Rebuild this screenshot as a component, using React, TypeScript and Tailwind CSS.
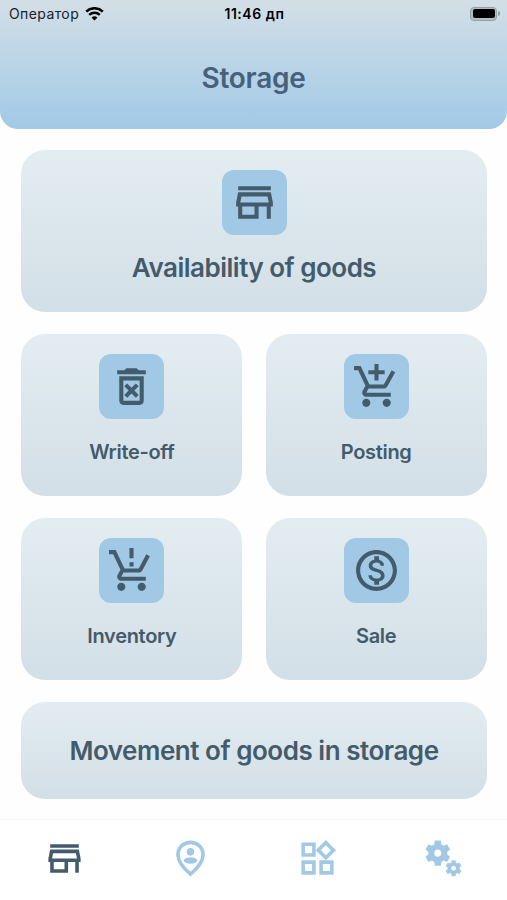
import React from 'react';
import {
    MdOutlineStore,
    MdOutlineDeleteForever,
    MdOutlineAddShoppingCart,
    MdOutlineProductionQuantityLimits,
    MdOutlineMonetizationOn,
    MdOutlineWidgets,
    MdMiscellaneousServices
} from 'react-icons/md';

type Icon = React.ComponentType<{ size?: number }>;

const PersonPin: Icon = ({ size = 24 }) => (
    <svg width={size} height={size} viewBox="0 0 24 24" fill="currentColor">
        <path
            d="M12 3c3.5 0 7 2.6 7 6.9 0 3.2-2.3 6.9-7 10.8-4.7-3.9-7-7.6-7-10.8C5 5.6 8.5 3 12 3z"
            fill="none"
            stroke="currentColor"
            strokeWidth="2"
        />
        <circle cx="12" cy="8.3" r="2.1" />
        <ellipse cx="12" cy="13.1" rx="3.8" ry="1.8" />
    </svg>
);

const StatusBar: React.FC = () => (
    <div className="grid grid-cols-3 items-center h-[27px] pl-[9px] pr-[7px] text-black">
        <div className="flex items-center gap-[6px]">
            <span className="text-[14px] tracking-[0.4px] text-[#17222b]">Оператор</span>
            <svg width="19" height="14" viewBox="0 0 19 14" fill="none" stroke="currentColor">
                <path d="M1.2 4.6a12 12 0 0 1 16.6 0" strokeWidth="2.6" />
                <path d="M4.2 7.9a7.7 7.7 0 0 1 10.6 0" strokeWidth="2.4" />
                <path d="M9.5 13.6 6.6 10.7a4.2 4.2 0 0 1 5.8 0z" fill="currentColor" stroke="none" />
            </svg>
        </div>
        <span className="text-center text-[14px] font-semibold tracking-[0.55px] whitespace-nowrap">11:46 дп</span>
        <div className="flex justify-end items-center gap-px">
            <div className="w-[27px] h-[14px] rounded-[4px] border border-[#93a0a6] bg-[#b3bec2] p-[1.5px]">
                <div className="w-full h-full rounded-[2px] bg-black" />
            </div>
            <div className="w-[2px] h-[5px] rounded-r-full bg-[#93a0a6]" />
        </div>
    </div>
);

interface CardProps {
    title: string;
    icon?: Icon;
    className: string;
}

const Card: React.FC<CardProps> = ({ title, icon: CardIcon, className }) => (
    <button
        className={`flex flex-col items-center rounded-[24px] bg-linear-to-b from-[#e3edf1] to-[#d3dfe7] font-semibold text-[#435b6b] ${className}`}
    >
        {CardIcon && (
            <span className="flex items-center justify-center w-[65px] h-[65px] rounded-[12px] bg-[#a1c9e6]">
                <CardIcon size={49} />
            </span>
        )}
        <span className="whitespace-nowrap">{title}</span>
    </button>
);

const smallCard = 'h-[162px] pt-5 gap-[18px] text-[20px] leading-[30px] tracking-[-0.3px]';

const tabs: { icon: Icon; active?: boolean }[] = [
    { icon: MdOutlineStore, active: true },
    { icon: PersonPin },
    { icon: MdOutlineWidgets },
    { icon: MdMiscellaneousServices }
];

const App: React.FC = () => {
    return (
        <div className="w-full h-[900px] flex flex-col bg-[#fefefe] font-['Inter',sans-serif] overflow-hidden">
            <header className="h-[129px] rounded-b-[18px] bg-linear-to-b from-[#d3dfe6] via-[#bad4e7] to-[#a1c9e6]">
                <StatusBar />
                <h1 className="pt-[31px] text-center text-[28px] leading-10 font-semibold tracking-[-0.3px] text-[#47617a]">Storage</h1>
            </header>

            <main className="flex-1 pl-[21.3px] pr-[20.3px] pt-[21px]">
                <Card
                    title="Availability of goods"
                    icon={MdOutlineStore}
                    className="w-full h-[162px] pt-5 gap-[13px] text-[26px] leading-10 tracking-[-0.5px]"
                />
                <div className="grid grid-cols-2 gap-x-[23.2px] gap-y-[22px] py-[22px]">
                    <Card title="Write-off" icon={MdOutlineDeleteForever} className={smallCard} />
                    <Card title="Posting" icon={MdOutlineAddShoppingCart} className={smallCard} />
                    <Card title="Inventory" icon={MdOutlineProductionQuantityLimits} className={smallCard} />
                    <Card title="Sale" icon={MdOutlineMonetizationOn} className={smallCard} />
                </div>
                <Card
                    title="Movement of goods in storage"
                    className="w-full h-[97px] justify-center text-[26px] leading-10 tracking-[-0.47px]"
                />
            </main>

            <nav className="h-[81px] grid grid-cols-4 border-t border-[#f8f8f8] bg-white pl-px">
                {tabs.map(({ icon: TabIcon, active }, i) => (
                    <button
                        key={i}
                        className={`flex justify-center pt-[16.5px] ${active ? 'text-[#435b6b]' : 'text-[#a1c9e6]'}`}
                    >
                        <TabIcon size={43} />
                    </button>
                ))}
            </nav>
        </div>
    );
};

export default App;
